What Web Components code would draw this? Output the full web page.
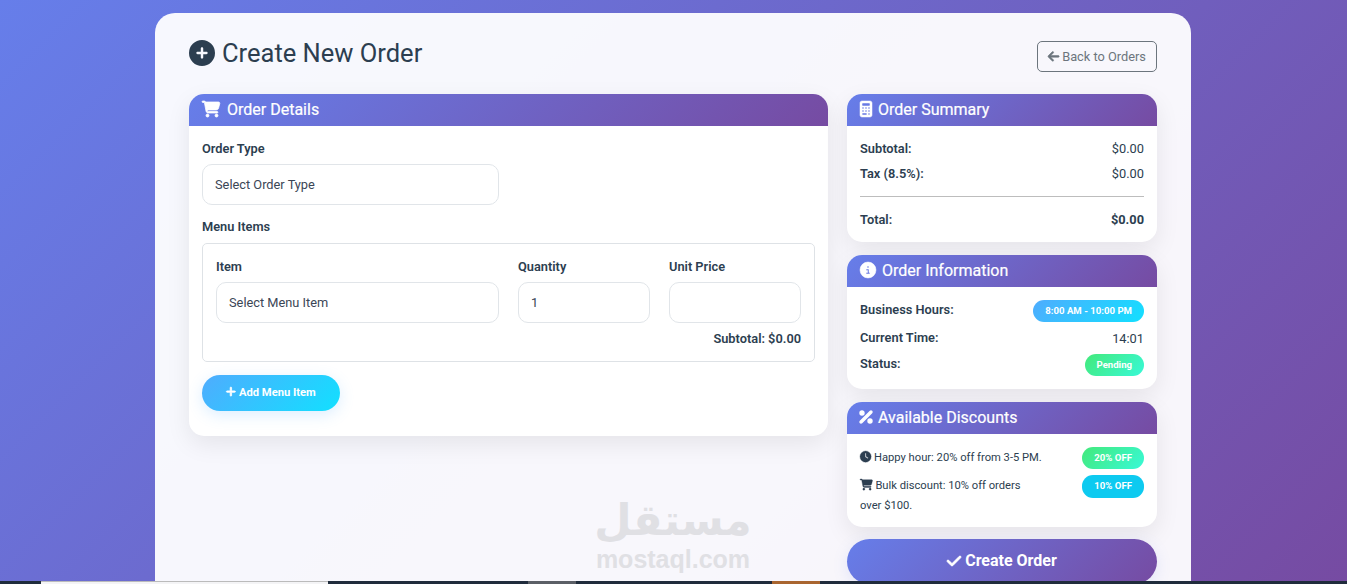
<!DOCTYPE html>
<html lang="en">
<head>
<meta charset="utf-8">
<title>Create New Order</title>
<style>
  html, body { height: 100%; }
  body {
    margin: 0;
    overflow: hidden;
    font-family: Roboto, "Liberation Sans", sans-serif;
    color: #2c3e50;
    background: linear-gradient(135deg, #667eea 0%, #764ba2 100%);
  }
</style>
</head>
<body>
<order-page></order-page>

<script>
const ICONS = {
  plusCircle: ["0 0 512 512", "M256 512A256 256 0 1 0 256 0a256 256 0 1 0 0 512zM232 344V280H168c-13.3 0-24-10.7-24-24s10.7-24 24-24h64V168c0-13.3 10.7-24 24-24s24 10.7 24 24v64h64c13.3 0 24 10.7 24 24s-10.7 24-24 24H280v64c0 13.3-10.7 24-24 24s-24-10.7-24-24z"],
  cart: ["0 0 576 512", "M0 24C0 10.7 10.7 0 24 0H69.5c22 0 41.5 12.8 50.6 32h411c26.3 0 45.5 25 38.6 50.4l-41 152.3c-8.5 31.4-37 53.3-69.5 53.3H170.7l5.4 28.5c2.2 11.3 12.1 19.5 23.6 19.5H488c13.3 0 24 10.7 24 24s-10.7 24-24 24H199.7c-34.6 0-64.3-24.6-70.7-58.5L77.4 54.5c-.7-3.8-4-6.5-7.9-6.5H24C10.7 48 0 37.3 0 24zM128 464a48 48 0 1 1 96 0 48 48 0 1 1 -96 0zm336-48a48 48 0 1 1 0 96 48 48 0 1 1 0-96z"],
  arrowLeft: ["0 0 448 512", "M9.4 233.4c-12.5 12.5-12.5 32.8 0 45.3l160 160c12.5 12.5 32.8 12.5 45.3 0s12.5-32.8 0-45.3L109.2 288 416 288c17.7 0 32-14.3 32-32s-14.3-32-32-32l-306.7 0L214.6 118.6c12.5-12.5 12.5-32.8 0-45.3s-32.8-12.5-45.3 0l-160 160z"],
  calculator: ["0 0 384 512", "M64 0C28.7 0 0 28.7 0 64V448c0 35.3 28.7 64 64 64H320c35.3 0 64-28.7 64-64V64c0-35.3-28.7-64-64-64H64zM96 64H288c17.7 0 32 14.3 32 32v32c0 17.7-14.3 32-32 32H96c-17.7 0-32-14.3-32-32V96c0-17.7 14.3-32 32-32zm32 160a32 32 0 1 1 -64 0 32 32 0 1 1 64 0zM96 352a32 32 0 1 1 0-64 32 32 0 1 1 0 64zM64 416c0-17.7 14.3-32 32-32h96c17.7 0 32 14.3 32 32s-14.3 32-32 32H96c-17.7 0-32-14.3-32-32zM192 256a32 32 0 1 1 0-64 32 32 0 1 1 0 64zm32 64a32 32 0 1 1 -64 0 32 32 0 1 1 64 0zm64-64a32 32 0 1 1 0-64 32 32 0 1 1 0 64zm32 64a32 32 0 1 1 -64 0 32 32 0 1 1 64 0zM288 448a32 32 0 1 1 0-64 32 32 0 1 1 0 64z"],
  info: ["0 0 512 512", "M256 512A256 256 0 1 0 256 0a256 256 0 1 0 0 512zM216 336h24V272H216c-13.3 0-24-10.7-24-24s10.7-24 24-24h48c13.3 0 24 10.7 24 24v88h8c13.3 0 24 10.7 24 24s-10.7 24-24 24H216c-13.3 0-24-10.7-24-24s10.7-24 24-24zm40-208a32 32 0 1 1 0 64 32 32 0 1 1 0-64z"],
  percent: ["0 0 384 512", "M374.6 118.6c12.5-12.5 12.5-32.8 0-45.3s-32.8-12.5-45.3 0l-320 320c-12.5 12.5-12.5 32.8 0 45.3s32.8 12.5 45.3 0l320-320zM128 128A64 64 0 1 0 0 128a64 64 0 1 0 128 0zM384 384a64 64 0 1 0 -128 0 64 64 0 1 0 128 0z"],
  clock: ["0 0 512 512", "M256 0a256 256 0 1 1 0 512A256 256 0 1 1 256 0zM232 120V256c0 8 4 15.5 10.7 20l96 64c11 7.4 25.9 4.4 33.3-6.7s4.4-25.9-6.7-33.3L280 243.2V120c0-13.3-10.7-24-24-24s-24 10.7-24 24z"],
  plus: ["0 0 448 512", "M256 80c0-17.7-14.3-32-32-32s-32 14.3-32 32V224H48c-17.7 0-32 14.3-32 32s14.3 32 32 32H192V432c0 17.7 14.3 32 32 32s32-14.3 32-32V288H400c17.7 0 32-14.3 32-32s-14.3-32-32-32H256V80z"],
  check: ["0 0 448 512", "M438.6 105.4c12.5 12.5 12.5 32.8 0 45.3l-256 256c-12.5 12.5-32.8 12.5-45.3 0l-128-128c-12.5-12.5-12.5-32.8 0-45.3s32.8-12.5 45.3 0L160 338.7 393.4 105.4c12.5-12.5 32.8-12.5 45.3 0z"]
};

class FaIcon extends HTMLElement {
  connectedCallback() {
    const [box, d] = ICONS[this.getAttribute("name")];
    const size = this.getAttribute("size") || "16";
    const weight = this.getAttribute("weight") || "0";
    const [, , w, h] = box.split(" ").map(Number);
    this.attachShadow({ mode: "open" }).innerHTML = `
      <style>
        :host { display: inline-flex; flex: none; vertical-align: -0.125em; }
        svg { display: block; fill: currentColor; overflow: visible; }
      </style>
      <svg xmlns="http://www.w3.org/2000/svg" viewBox="${box}" height="${size}" width="${size * w / h}"><path fill-rule="evenodd" stroke="currentColor" stroke-width="${weight}" d="${d}"/></svg>
    `;
  }
}
customElements.define("fa-icon", FaIcon);

class InfoCard extends HTMLElement {
  connectedCallback() {
    const icon = this.getAttribute("icon");
    const weight = this.getAttribute("icon-weight") || "16";
    this.attachShadow({ mode: "open" }).innerHTML = `
      <style>
        :host {
          display: block;
          background: #fff;
          border-radius: 15px;
          box-shadow: 0 8px 25px rgba(0, 0, 0, 0.08);
          overflow: hidden;
        }
        header {
          height: 32px;
          box-sizing: border-box;
          padding: 0 13px 2px;
          display: flex;
          align-items: center;
          gap: var(--head-gap, 6px);
          color: #fff;
          font-size: 16px;
          font-weight: 400;
          -webkit-text-stroke: 0.2px #fff;
          background: linear-gradient(135deg, #667eea 0%, #764ba2 100%);
        }
        .body { padding: 13px; }
      </style>
      <header><fa-icon name="${icon}" size="16" weight="${weight}"></fa-icon><span>${this.getAttribute("heading")}</span></header>
      <div class="body"><slot></slot></div>
    `;
  }
}
customElements.define("info-card", InfoCard);

class FormField extends HTMLElement {
  connectedCallback() {
    this.attachShadow({ mode: "open" }).innerHTML = `
      <style>
        :host { display: block; font-size: 12.8px; }
        label { display: block; font-weight: 600; line-height: 15px; margin-bottom: 8px; color: #2c3e50; }
        .control {
          height: 41px;
          box-sizing: border-box;
          padding: 0 12px;
          display: flex;
          align-items: center;
          background: #fff;
          border: 1px solid #e1e5e9;
          border-radius: 10px;
          color: #3b4656;
        }
      </style>
      <label>${this.getAttribute("label")}</label>
      <div class="control"><slot></slot></div>
    `;
  }
}
customElements.define("form-field", FormField);

class PillBadge extends HTMLElement {
  connectedCallback() {
    this.attachShadow({ mode: "open" }).innerHTML = `
      <style>
        :host {
          display: inline-flex;
          align-items: center;
          justify-content: center;
          flex: none;
          height: 22px;
          box-sizing: border-box;
          padding: 0 12px 1px;
          border-radius: 11px;
          color: #fff;
          font-size: 9.6px;
          font-weight: 700;
          white-space: nowrap;
        }
        :host([kind="info"]) { background: linear-gradient(135deg, #4facfe 0%, #12e0ff 100%); }
        :host([kind="success"]) { background: linear-gradient(135deg, #43e97b 0%, #38f9d7 100%); }
        :host([kind="solid"]) { background: #0dcaf0; height: 23px; }
      </style>
      <slot></slot>
    `;
  }
}
customElements.define("pill-badge", PillBadge);

class SummaryRow extends HTMLElement {
  connectedCallback() {
    this.attachShadow({ mode: "open" }).innerHTML = `
      <style>
        :host {
          display: flex;
          justify-content: space-between;
          align-items: center;
          font-size: 12.8px;
          color: #2c3e50;
        }
        b { font-weight: 600; margin-bottom: var(--label-lift, 0); }
        :host([strong]) .val { font-weight: 700; }
      </style>
      <b>${this.getAttribute("label")}</b>
      <span class="val"><slot></slot></span>
    `;
  }
}
customElements.define("summary-row", SummaryRow);

class DiscountRow extends HTMLElement {
  connectedCallback() {
    const icon = this.getAttribute("icon");
    this.attachShadow({ mode: "open" }).innerHTML = `
      <style>
        :host {
          display: flex;
          justify-content: space-between;
          align-items: flex-start;
          font-size: 11.2px;
          line-height: 20px;
          color: #2c3e50;
        }
        p { margin: 0; padding-top: 1px; width: 184px; }
      </style>
      <p><fa-icon name="${icon}" size="11.2" weight="16"></fa-icon> <span><slot></slot></span></p>
      <slot name="badge"></slot>
    `;
  }
}
customElements.define("discount-row", DiscountRow);

class OrderDetails extends HTMLElement {
  connectedCallback() {
    this.attachShadow({ mode: "open" }).innerHTML = `
      <style>
        :host { display: block; }
        info-card { --head-gap: 7px; }
        .top { padding-top: 2px; }
        .type { width: 297px; margin-bottom: 14px; }
        h4 { margin: 0 0 9px; font-size: 12.8px; line-height: 15px; font-weight: 600; color: #2c3e50; }
        .items {
          border: 1px solid #dee2e6;
          border-radius: 5px;
          padding: 15px 13px 15px;
          margin-bottom: 13px;
        }
        .cols { display: grid; grid-template-columns: 283px 132px 132px; gap: 19px; }
        .sub { text-align: right; font-size: 12.8px; line-height: 15px; font-weight: 600; margin-top: 8px; color: #2c3e50; }
        button {
          display: inline-flex;
          align-items: center;
          justify-content: center;
          gap: 3px;
          width: 138px;
          height: 36px;
          margin-bottom: 12px;
          border: 0;
          padding: 0 0 2px;
          border-radius: 18px;
          color: #fff;
          font: 700 11.2px Roboto, sans-serif;
          background: linear-gradient(135deg, #4facfe 0%, #12e0ff 100%);
          box-shadow: 0 4px 15px rgba(79, 172, 254, 0.2);
        }
      </style>
      <info-card heading="Order Details" icon="cart" icon-weight="24">
        <div class="top">
          <form-field class="type" label="Order Type">Select Order Type</form-field>
          <h4>Menu Items</h4>
          <div class="items">
            <div class="cols">
              <form-field label="Item">Select Menu Item</form-field>
              <form-field label="Quantity">1</form-field>
              <form-field label="Unit Price"></form-field>
            </div>
            <div class="sub">Subtotal: $0.00</div>
          </div>
          <button type="button"><fa-icon name="plus" size="11.2" weight="36"></fa-icon>Add Menu Item</button>
        </div>
      </info-card>
    `;
  }
}
customElements.define("order-details", OrderDetails);

class OrderSidebar extends HTMLElement {
  connectedCallback() {
    this.attachShadow({ mode: "open" }).innerHTML = `
      <style>
        :host { display: flex; flex-direction: column; gap: 13px; }
        .summary { display: flex; flex-direction: column; margin: -3px 0 -3px; }
        .summary summary-row { height: 25px; }
        hr { border: 0; border-top: 1px solid #bdbdbd; margin: 10px 0 10px; }
        .info { display: flex; flex-direction: column; }
        .discounts { display: flex; flex-direction: column; gap: 6px; margin-bottom: -2px; }
        button {
          display: flex;
          align-items: center;
          justify-content: center;
          gap: 4px;
          height: 45px;
          margin-top: -1px;
          border: 0;
          padding: 0 0 2px;
          border-radius: 25px;
          color: #fff;
          font: 700 16px Roboto, sans-serif;
          background: linear-gradient(135deg, #667eea 0%, #764ba2 100%);
          box-shadow: 0 4px 15px rgba(102, 126, 234, 0.15);
        }
      </style>
      <info-card heading="Order Summary" icon="calculator">
        <div class="summary">
          <summary-row label="Subtotal:">$0.00</summary-row>
          <summary-row label="Tax (8.5%):">$0.00</summary-row>
          <hr>
          <summary-row label="Total:" strong>$0.00</summary-row>
        </div>
      </info-card>
      <info-card heading="Order Information" icon="info">
        <div class="info">
          <summary-row label="Business Hours:" style="height:22px;--label-lift:3px"><pill-badge kind="info">8:00 AM - 10:00 PM</pill-badge></summary-row>
          <summary-row label="Current Time:" style="height:32px;--label-lift:2px">14:01</summary-row>
          <summary-row label="Status:" style="height:22px;--label-lift:3px"><pill-badge kind="success">Pending</pill-badge></summary-row>
        </div>
      </info-card>
      <info-card heading="Available Discounts" icon="percent" icon-weight="44">
        <div class="discounts">
          <discount-row icon="clock">Happy hour: 20% off from 3-5 PM.<pill-badge slot="badge" kind="success">20% OFF</pill-badge></discount-row>
          <discount-row icon="cart">Bulk discount: 10% off orders over $100.<pill-badge slot="badge" kind="solid">10% OFF</pill-badge></discount-row>
        </div>
      </info-card>
      <button type="button"><fa-icon name="check" size="16" weight="28"></fa-icon>Create Order</button>
    `;
  }
}
customElements.define("order-sidebar", OrderSidebar);

class OrderPage extends HTMLElement {
  connectedCallback() {
    this.attachShadow({ mode: "open" }).innerHTML = `
      <style>
        :host { display: block; height: 100%; position: relative; overflow: hidden; }
        .shell {
          width: 1036px;
          box-sizing: border-box;
          margin: 13px 0 0 155px;
          height: 640px;
          padding: 22px 34px;
          background: rgba(255, 255, 255, 0.95);
          border-radius: 20px;
        }
        .top {
          display: flex;
          justify-content: space-between;
          align-items: center;
          height: 36px;
          margin-bottom: 23px;
        }
        h1 {
          margin: 0;
          display: flex;
          align-items: center;
          gap: 7px;
          font-size: 25.5px;
          font-weight: 400;
          color: #2c3e50;
        }
        .back {
          display: flex;
          align-items: center;
          justify-content: center;
          gap: 3px;
          width: 120px;
          height: 31px;
          margin-top: 7px;
          box-sizing: border-box;
          border: 1px solid #6c757d;
          border-radius: 5px;
          color: #6c757d;
          font-size: 12.8px;
        }
        .columns { display: grid; grid-template-columns: 639px 310px; gap: 19px; align-items: start; }
        .mark {
          position: absolute;
          left: 586px;
          top: 494px;
          width: 174px;
          text-align: center;
          color: #e0e0e4;
          pointer-events: none;
        }
        .mark .ar { display: block; font: 700 43px/52px "DejaVu Sans", sans-serif; }
        .mark .en { display: block; font: 700 25px/26px "Liberation Sans", sans-serif; }
        .strip {
          position: absolute;
          left: 0; right: 0; bottom: 0;
          height: 3px;
          background: #202c3c;
          display: flex;
        }
        .strip i { display: block; height: 3px; }
      </style>
      <div class="shell">
        <div class="top">
          <h1><fa-icon name="plusCircle" size="26"></fa-icon>Create New Order</h1>
          <div class="back"><fa-icon name="arrowLeft" size="12.8" weight="24"></fa-icon>Back to Orders</div>
        </div>
        <div class="columns">
          <order-details></order-details>
          <order-sidebar></order-sidebar>
        </div>
      </div>
      <div class="mark"><span class="ar" lang="ar" dir="rtl">مستقل</span><span class="en">mostaql.com</span></div>
      <div class="strip">
        <i style="margin-left:41px;width:287px;background:#f4f4f6;border-top:1px solid #bbb;box-sizing:border-box"></i>
        <i style="margin-left:200px;width:48px;background:#5b5f66"></i>
        <i style="margin-left:196px;width:48px;background:#a9652f"></i>
      </div>
    `;
  }
}
customElements.define("order-page", OrderPage);
</script>
</body>
</html>
